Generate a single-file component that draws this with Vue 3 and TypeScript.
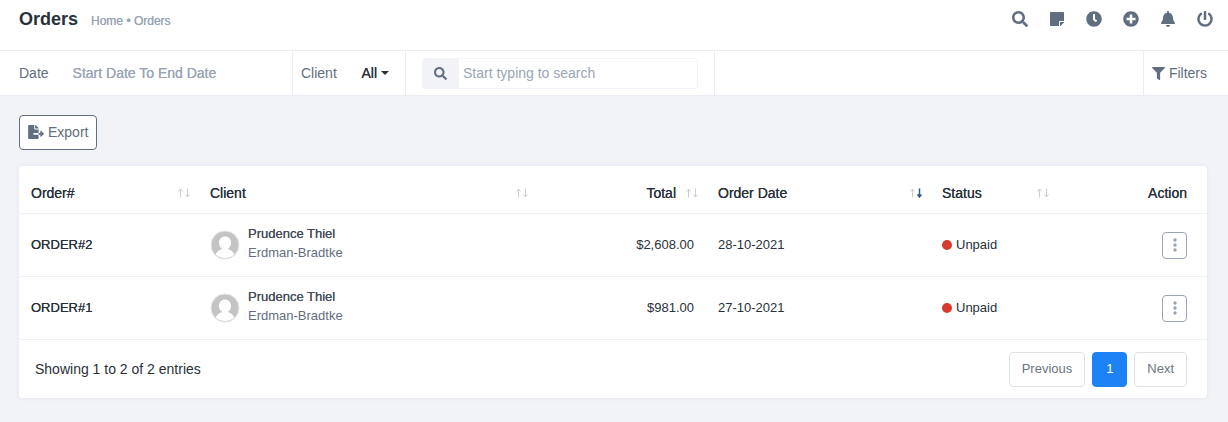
<script setup lang="ts">
import { ref } from 'vue'

interface Column {
  key: string
  label: string
  sortable: boolean
  sorted?: boolean
}

interface Order {
  id: string
  client: string
  company: string
  total: string
  date: string
  status: string
}

interface Icon {
  name: string
  box: string
  path: string
}

const columns: Column[] = [
  { key: 'order', label: 'Order#', sortable: true },
  { key: 'client', label: 'Client', sortable: true },
  { key: 'total', label: 'Total', sortable: true },
  { key: 'date', label: 'Order Date', sortable: true, sorted: true },
  { key: 'status', label: 'Status', sortable: true },
  { key: 'action', label: 'Action', sortable: false },
]

const orders: Order[] = [
  { id: 'ORDER#2', client: 'Prudence Thiel', company: 'Erdman-Bradtke', total: '$2,608.00', date: '28-10-2021', status: 'Unpaid' },
  { id: 'ORDER#1', client: 'Prudence Thiel', company: 'Erdman-Bradtke', total: '$981.00', date: '27-10-2021', status: 'Unpaid' },
]

const searchPath =
  'M505 442.700 405.300 343c-4.500-4.500-10.600-7-17-7H372c27.600-35.300 44-79.700 44-128C416 93.100 322.900 0 208 0S0 93.100 0 208s93.100 208 208 208c48.300 0 92.700-16.400 128-44v16.300c0 6.400 2.500 12.500 7 17l99.700 99.700c9.400 9.400 24.600 9.400 33.900 0l28.300-28.300c9.400-9.400 9.400-24.600.1-34zM208 336c-70.700 0-128-57.200-128-128 0-70.700 57.200-128 128-128 70.700 0 128 57.200 128 128 0 70.700-57.200 128-128 128z'

const tools: Icon[] = [
  { name: 'Search', box: '0 0 512 512', path: searchPath },
  { name: 'Notes', box: '-32 0 512 512', path: 'M312 320h136V56c0-13.300-10.700-24-24-24H24C10.700 32 0 42.700 0 56v400c0 13.300 10.700 24 24 24h264V344c0-13.200 10.800-24 24-24zm129 55l-98 98c-4.500 4.500-10.600 7-17 7h-6V352h128v6.100c0 6.300-2.500 12.400-7 16.900z' },
  { name: 'Timer', box: '0 0 512 512', path: 'M256 8C119 8 8 119 8 256s111 248 248 248 248-111 248-248S393 8 256 8zm92.500 313-20 25a16 16 0 0 1-22.500 2.500l-67-49.700a40 40 0 0 1-15-31.300V112a16 16 0 0 1 16-16h32a16 16 0 0 1 16 16v144l58 42.500a16 16 0 0 1 2.500 22.500z' },
  { name: 'Add', box: '0 0 512 512', path: 'M256 8C119 8 8 119 8 256s111 248 248 248 248-111 248-248S393 8 256 8zm144 276c0 6.600-5.400 12-12 12h-92v92c0 6.600-5.400 12-12 12h-56c-6.600 0-12-5.400-12-12v-92h-92c-6.600 0-12-5.400-12-12v-56c0-6.600 5.400-12 12-12h92v-92c0-6.600 5.400-12 12-12h56c6.600 0 12 5.400 12 12v92h92c6.600 0 12 5.400 12 12v56z' },
  { name: 'Notifications', box: '-32 0 512 512', path: 'M224 512c35.300 0 64-28.700 64-64H160c0 35.300 28.600 64 64 64zm215.400-149.700c-19.300-20.800-55.500-52-55.500-154.300 0-77.700-54.500-139.900-127.900-155.200V32c0-17.700-14.300-32-32-32s-32 14.300-32 32v20.800C118.600 68.100 64.100 130.300 64.100 208c0 102.300-36.200 133.500-55.500 154.300-6 6.400-8.700 14.100-8.600 21.700.1 16.400 13 32 32.100 32h383.800c19.100 0 32-15.600 32.100-32 0-7.600-2.600-15.300-8.600-21.700z' },
  { name: 'Log out', box: '0 0 512 512', path: 'M400 54.100c63 45 104 118.600 104 201.900 0 136.800-110.800 247.700-247.500 248C120 504.300 8.200 393 8 256.400 7.900 173.100 48.900 99.300 111.800 54.200c11.700-8.300 28-4.800 35 7.700L162.600 90c5.900 10.500 3.100 23.800-6.600 31-41.500 30.800-68 79.600-68 134.900-.1 92.300 74.500 168.100 168 168.100 91.600 0 168.600-74.200 168-169.100-.3-51.800-24.700-101.800-68.100-134-9.700-7.200-12.400-20.500-6.500-30.900l15.800-28.100c7-12.400 23.200-16.100 34.800-7.800zM296 264V24c0-13.300-10.700-24-24-24h-32c-13.300 0-24 10.700-24 24v240c0 13.300 10.700 24 24 24h32c13.300 0 24-10.700 24-24z' },
]

const dateRange = ref('')
const search = ref('')
</script>

<template>
  <div class="page">
    <header class="topbar">
      <h1>Orders</h1>
      <nav class="crumbs" aria-label="Breadcrumb"><a href="#">Home</a> • <span>Orders</span></nav>
      <div class="tools">
        <button v-for="tool in tools" :key="tool.name" type="button" class="tool" :aria-label="tool.name">
          <svg :viewBox="tool.box"><path :d="tool.path" /></svg>
        </button>
      </div>
    </header>

    <form class="filters" @submit.prevent>
      <div class="cell date-filter">
        <label for="range">Date</label>
        <input id="range" v-model="dateRange" type="text" placeholder="Start Date To End Date" />
      </div>
      <div class="cell client-filter">
        <span>Client</span>
        <button type="button" class="picker" aria-haspopup="listbox" aria-label="Client: All">All<i class="caret"></i></button>
      </div>
      <div class="cell query">
        <label for="search" class="query-icon" aria-label="Search">
          <svg viewBox="0 0 512 512"><path :d="searchPath" /></svg>
        </label>
        <input id="search" v-model="search" type="text" placeholder="Start typing to search" />
      </div>
      <button type="button" class="more">
        <svg viewBox="0 0 512 512"><path d="M488 0H24C2.700 0-8 25.900 7.100 41L192 225.900V432c0 7.800 3.800 15.200 10.200 19.700l80 56C298 518.700 320 507.500 320 488V225.900L504.900 41C520 25.900 509.300 0 488 0z" /></svg>
        Filters
      </button>
    </form>

    <main>
      <button type="button" class="export">
        <svg viewBox="0 0 576 512"><path d="M384 121.900c0-6.300-2.500-12.400-7-16.900L279.100 7c-4.500-4.500-10.600-7-17-7H256v128h128zM571 308l-95.700-96.400c-10.100-10.100-27.400-3-27.400 11.300V288h-64v64h64v65.200c0 14.300 17.300 21.400 27.400 11.300L571 332c6.600-6.600 6.600-17.400 0-24zM192 336v-32c0-8.800 7.200-16 16-16h176V160H248c-13.200 0-24-10.800-24-24V0H24C10.700 0 0 10.700 0 24v464c0 13.300 10.700 24 24 24h336c13.300 0 24-10.700 24-24V352H208c-8.800 0-16-7.200-16-16z" /></svg>
        Export
      </button>

      <section class="card">
        <table>
          <colgroup>
            <col v-for="col in columns" :key="col.key" :class="'col-' + col.key" />
          </colgroup>
          <thead>
            <tr>
              <th v-for="col in columns" :key="col.key" scope="col" :class="'head-' + col.key">
                <div class="head">
                  <span>{{ col.label }}</span>
                  <svg v-if="col.sortable" class="sort" viewBox="0 0 12 10" aria-hidden="true">
                    <path d="M2.500 9.500v-8M.500 3.500l2-2.500 2 2.500" />
                    <path :class="{ on: col.sorted }" d="M9.500 .5v8M7.500 6.500l2 2.500 2-2.500" />
                  </svg>
                </div>
              </th>
            </tr>
          </thead>
          <tbody>
            <tr v-for="order in orders" :key="order.id">
              <td><a href="#" class="order-id">{{ order.id }}</a></td>
              <td>
                <div class="person">
                  <svg class="avatar" viewBox="0 0 30 30" aria-hidden="true">
                    <circle class="disc" cx="15" cy="15" r="14" />
                    <path class="figure" d="M15 6.500c3.500 0 6 2.500 6 6.200 0 2.500-1 4.600-2.700 5.700v.8c3 .6 5 2.700 6 5.300a14 14 0 0 1-18.600 0c1-2.600 3-4.700 6-5.300v-.8C10 17.300 9 15.200 9 12.700c0-3.700 2.500-6.200 6-6.200z" />
                    <circle class="ring" cx="15" cy="15" r="14" />
                  </svg>
                  <div>
                    <a href="#" class="name">{{ order.client }}</a>
                    <span class="company">{{ order.company }}</span>
                  </div>
                </div>
              </td>
              <td class="amount">{{ order.total }}</td>
              <td>{{ order.date }}</td>
              <td><span class="status"><i class="dot"></i>{{ order.status }}</span></td>
              <td class="actions">
                <button type="button" class="menu" :aria-label="'Actions for ' + order.id">
                  <svg viewBox="0 0 4 14"><circle cx="2" cy="2" r="1.700" /><circle cx="2" cy="7" r="1.700" /><circle cx="2" cy="12" r="1.700" /></svg>
                </button>
              </td>
            </tr>
          </tbody>
        </table>

        <footer class="foot">
          <p>Showing 1 to 2 of 2 entries</p>
          <nav class="pager" aria-label="Pages">
            <button type="button">Previous</button>
            <button type="button" class="current" aria-current="page">1</button>
            <button type="button">Next</button>
          </nav>
        </footer>
      </section>
    </main>
  </div>
</template>

<style>
body {
  margin: 0;
  background: #f2f3f7;
}
</style>

<style scoped>
* {
  box-sizing: border-box;
}

.page {
  min-height: 100vh;
  background: #f2f3f7;
  color: #28313c;
  font: 14px/20px "Liberation Sans", Arial, sans-serif;
}

button,
input {
  margin: 0;
  padding: 0;
  border: 0;
  background: none;
  color: inherit;
  font: inherit;
}

button {
  cursor: pointer;
}

a {
  color: inherit;
  text-decoration: none;
}

svg {
  display: block;
  flex: none;
  fill: #616e80;
}

.topbar {
  display: flex;
  align-items: center;
  height: 51px;
  padding: 0 15px 12px 19px;
  border-bottom: 1px solid #e8eef3;
  background: #fff;
}

h1 {
  margin: 0;
  font-size: 18px;
  line-height: 24px;
}

.crumbs {
  margin: 4px 0 0 13px;
  color: #99a5b5;
  font-size: 12px;
  text-shadow: 0 0 0 currentColor;
}

.tools {
  display: flex;
  gap: 21px;
  margin-left: auto;
}

.tool svg {
  width: 16px;
  height: 16px;
}

.filters {
  display: flex;
  height: 45px;
  border-bottom: 1px solid #e8eef3;
  background: #fff;
  color: #616e80;
}

.cell {
  display: flex;
  align-items: center;
  border-right: 1px solid #e8eef3;
}

.date-filter {
  width: 293px;
  padding-left: 19px;
}

.date-filter input {
  flex: 1;
  min-width: 0;
  margin-left: 24px;
  text-shadow: 0 0 0 #99a5b5;
}

input::placeholder {
  color: #99a5b5;
  opacity: 1;
}

.client-filter {
  width: 113px;
  padding: 0 16px 0 8px;
  justify-content: space-between;
}

.picker {
  display: flex;
  align-items: center;
  gap: 4px;
  color: #28313c;
  text-shadow: 0 0 0 currentColor;
}

.caret {
  border: 4px solid transparent;
  border-top-color: currentColor;
  border-bottom: 0;
}

.query {
  width: 309px;
  padding: 0 16px;
}

.query-icon {
  display: flex;
  align-items: center;
  justify-content: center;
  width: 37px;
  height: 31px;
  border-radius: 4px 0 0 4px;
  background: #f2f3f7;
}

.query-icon svg {
  width: 13px;
  height: 13px;
}

.query input {
  flex: 1;
  min-width: 0;
  height: 31px;
  padding: 0 4px;
  border: 1px solid #f1f3f7;
  border-left: 0;
  border-radius: 0 4px 4px 0;
}

.more {
  display: flex;
  align-items: center;
  gap: 4px;
  margin-left: auto;
  padding: 0 21px 0 8px;
  border-left: 1px solid #e8eef3;
}

.more svg {
  width: 13px;
  height: 13px;
}

main {
  padding: 19px 21px 24px 19px;
}

.export {
  display: flex;
  align-items: center;
  gap: 4px;
  height: 35px;
  padding: 0 8px 1px;
  border: 1px solid #616e80;
  border-radius: 4px;
  background: #fff;
  color: #616e80;
}

.export svg {
  width: 16px;
  height: 14px;
}

.card {
  margin-top: 16px;
  border-radius: 4px;
  background: #fff;
  box-shadow: 0 0 4px #dfe4ee;
}

table {
  width: 100%;
  border-collapse: separate;
  border-spacing: 0;
  table-layout: fixed;
  font-size: 13px;
}

.col-order {
  width: 179px;
}

.col-total {
  width: 170px;
}

.col-date {
  width: 224px;
}

.col-status {
  width: 127px;
}

.col-action {
  width: 150px;
}

th,
td {
  padding: 0 12px;
  border-bottom: 1px solid #eef0f2;
  text-align: left;
}

th {
  height: 48px;
  padding: 6px 8px 0 12px;
  font-size: 14px;
  font-weight: 400;
  text-shadow: 0 0 0 currentColor;
}

td {
  height: 63px;
}

.head {
  display: flex;
  align-items: center;
  justify-content: space-between;
}

.head-total .head {
  justify-content: flex-end;
  gap: 10px;
}

.head-action {
  padding-right: 20px;
}

.head-action .head {
  justify-content: flex-end;
}

.sort {
  width: 12px;
  height: 10px;
  fill: none;
  stroke: #ccced2;
}

.sort .on {
  stroke: #35577d;
  stroke-width: 1.500;
}

.order-id,
.name {
  text-shadow: 0 0 0 currentColor;
}

.person {
  display: flex;
  align-items: center;
  gap: 8px;
  line-height: 19px;
}

.avatar {
  width: 30px;
  height: 30px;
}

.disc {
  fill: #c4c4c4;
}

.figure {
  fill: #fff;
}

.ring {
  fill: none;
  stroke: #e6e7ed;
}

.name,
.company {
  display: block;
}

.name {
  color: #454d5b;
}

.person > div {
  padding-bottom: 5px;
}

.company {
  color: #616e80;
}

.amount {
  text-align: right;
}

.status {
  display: flex;
  align-items: center;
  gap: 4px;
}

.dot {
  width: 10px;
  height: 10px;
  border-radius: 50%;
  background: #d73a2f;
}

.actions {
  padding-right: 20px;
}

.menu {
  display: flex;
  align-items: center;
  justify-content: center;
  width: 25px;
  height: 27px;
  margin-left: auto;
  border: 1px solid #99a5b5;
  border-radius: 4px;
}

.menu svg {
  width: 4px;
  height: 14px;
  fill: #99a5b5;
}

.foot {
  display: flex;
  align-items: center;
  justify-content: space-between;
  height: 58px;
  padding: 0 20px 0 16px;
}

.foot p {
  margin: 0;
}

.pager {
  display: flex;
  gap: 7px;
  font-size: 13px;
}

.pager button {
  height: 35px;
  padding: 0 12px;
  border: 1px solid #dee2e6;
  border-radius: 4px;
  color: #6c757d;
}

.pager .current {
  min-width: 35px;
  border-color: #1d82f5;
  background: #1d82f5;
  color: #fff;
}
</style>
